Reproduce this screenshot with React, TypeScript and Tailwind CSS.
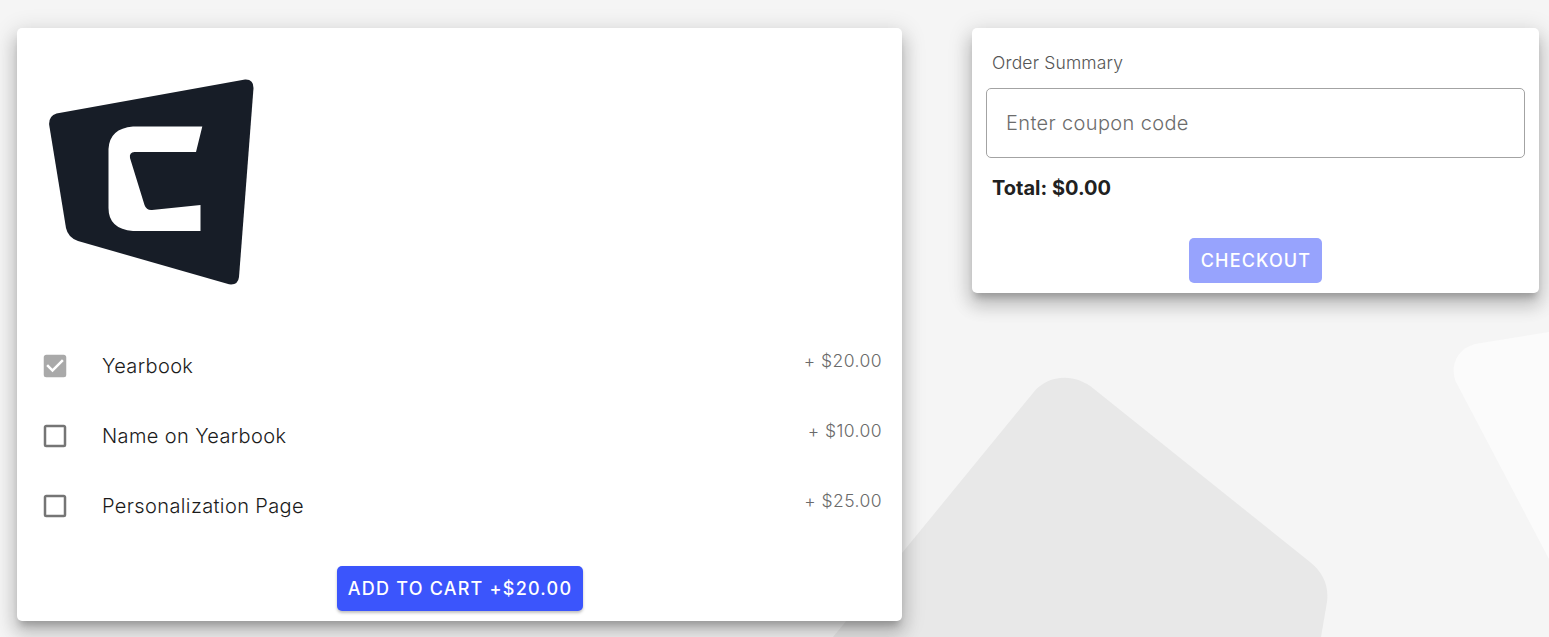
import React from "react";

const cardShadow =
  "shadow-[0_7.5px_7.5px_-3.75px_rgba(0,0,0,0.2),0_12.5px_17.5px_1.25px_rgba(0,0,0,0.14),0_5px_22.5px_3.75px_rgba(0,0,0,0.12)]";

const options = [
  { label: "Yearbook", price: "+ $20.00", checked: true },
  { label: "Name on Yearbook", price: "+ $10.00", checked: false },
  { label: "Personalization Page", price: "+ $25.00", checked: false },
];

function Backdrop() {
  return (
    <svg className="absolute inset-0 h-[637px] w-[1549px]" viewBox="0 0 1549 637" aria-hidden="true">
      <path
        d="M833 637 L902 553 L1033 393 C1048 374 1075 373 1094 389 L1310 562 Q1330 578 1327 602 L1321 637 Z"
        fill="#e8e8e8"
      />
      <path d="M1549 332 L1478 343.500 C1458 347 1449 365 1456 382 L1549 559 Z" fill="#fbfbfb" />
    </svg>
  );
}

function Logo() {
  return (
    <svg className="h-[210px] w-[210px]" viewBox="46 77 210 210" role="img" aria-label="Logo">
      <path
        d="M56.500 113.500 L245 79.500 Q253.500 79 253.500 88 L239 277 Q238 285.500 229 284.300 L78 241 Q68 237.500 66 228 L49.200 125 Q48.500 116 56.500 113.500 Z"
        fill="#171d27"
      />
      <path
        d="M133 126.500 H202.300 L196 152 H134.500 Q129 152.500 130 158 L144.500 205 Q146.500 210.500 152 210 L200.500 205 V231 H133 Q108.500 229 108.500 208 V149 Q109.500 128.500 133 126.500 Z"
        fill="#fff"
      />
    </svg>
  );
}

function CheckboxIcon({ checked }: { checked: boolean }) {
  return (
    <svg className="h-[30px] w-[30px] shrink-0" viewBox="0 0 24 24" fill={checked ? "#a9a9a9" : "#757575"}>
      {checked ? (
        <path d="M10,17L5,12L6.410,10.580L10,14.170L17.590,6.580L19,8M19,3H5C3.890,3 3,3.890 3,5V19A2,2 0 0,0 5,21H19A2,2 0 0,0 21,19V5C21,3.890 20.100,3 19,3Z" />
      ) : (
        <path d="M19,3H5C3.890,3 3,3.890 3,5V19A2,2 0 0,0 5,21H19A2,2 0 0,0 21,19V5C21,3.890 20.100,3 19,3M19,5V19H5V5H19Z" />
      )}
    </svg>
  );
}

export default function App() {
  return (
    <div className="relative h-[637px] w-[1549px] overflow-hidden bg-[#f5f5f5] font-['Inter',sans-serif]">
      <Backdrop />
      <main className="relative flex items-start gap-[70px] pt-7 pl-[17px]">
        <section className={`flex h-[593px] w-[885px] flex-col rounded-[5px] bg-white pt-[49px] ${cardShadow}`}>
          <div className="ml-[28.500px] h-[254px]">
            <Logo />
          </div>
          <ul className="pr-5 pl-[22.500px]">
            {options.map((o) => (
              <li key={o.label} className="flex h-[70px] items-start">
                <label className="flex h-[70px] flex-1 items-center gap-[32.500px] text-[20px] font-light tracking-[0.019em] text-[#1b1b1b]">
                  <CheckboxIcon checked={o.checked} />
                  {o.label}
                </label>
                <span className="pt-[17px] text-[17.500px] leading-[25px] font-light tracking-[0.025em] text-[#6a6a6a]">{o.price}</span>
              </li>
            ))}
          </ul>
          <button className="mt-[25px] flex h-[45px] w-[246px] items-center justify-center self-center rounded-[5px] bg-[#3b55fc] pl-[1px] text-[18px] font-medium tracking-[0.068em] whitespace-nowrap text-white shadow-[0_2px_3px_rgba(0,0,0,0.25)]">
            ADD TO CART +$20.00
          </button>
        </section>
        <aside className={`flex h-[265px] w-[567px] flex-col rounded-[5px] bg-white px-3.5 pt-[21px] ${cardShadow}`}>
          <h2 className="pl-1.5 text-[17.500px] leading-[28px] font-light tracking-[0.010em] text-[#555]">Order Summary</h2>
          <input
            className="mt-[11px] h-[70px] w-[539px] rounded-[5px] border border-[#a3a3a3] bg-transparent px-[19px] text-[20px] font-light tracking-[0.018em] outline-none placeholder:text-[#6c6c6c]"
            placeholder="Enter coupon code"
          />
          <p className="mt-[15px] pl-1.5 text-[20px] leading-[30px] font-bold text-[#212121]">Total: $0.00</p>
          <button
            disabled
            className="mt-[35px] flex h-[45px] w-[133px] items-center justify-center self-center rounded-[5px] bg-[#97a3fd] pl-[1px] text-[18px] font-medium tracking-[0.064em] text-white"
          >
            CHECKOUT
          </button>
        </aside>
      </main>
    </div>
  );
}
